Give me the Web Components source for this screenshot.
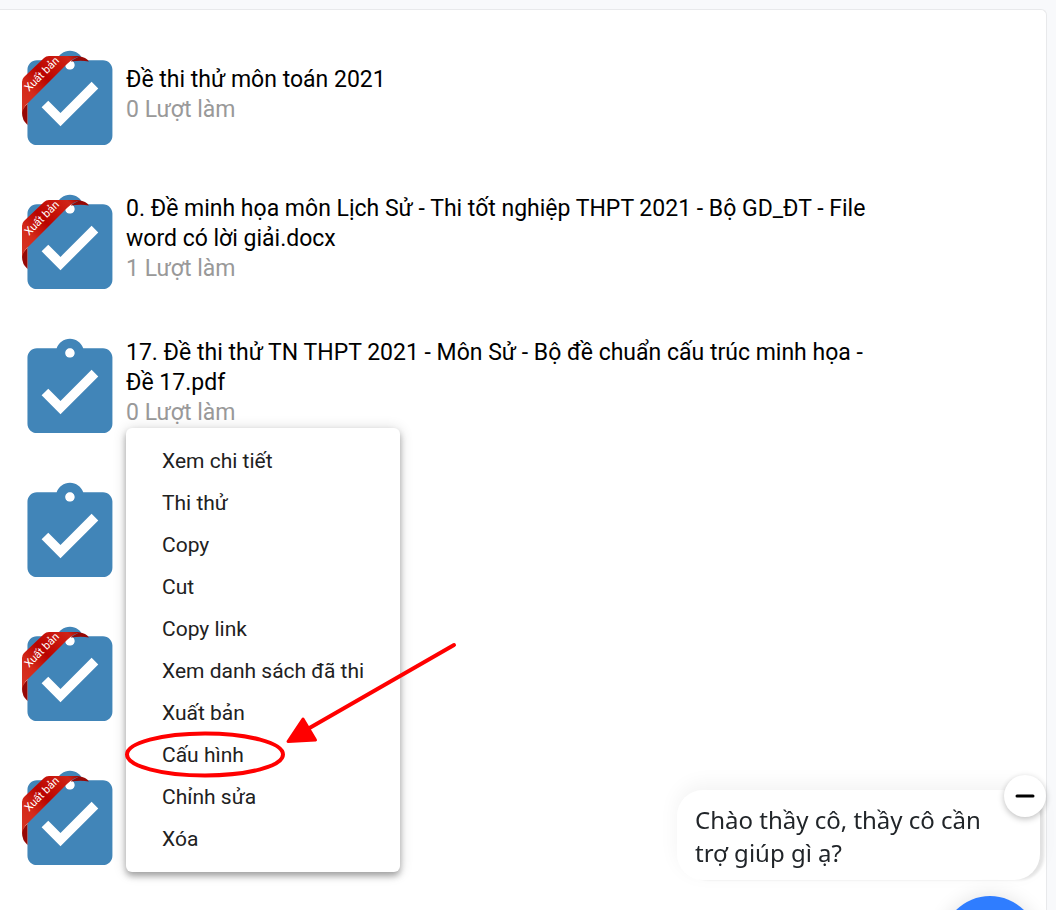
<!DOCTYPE html>
<html lang="vi">
<head>
<meta charset="utf-8">
<meta name="viewport" content="width=device-width, initial-scale=1">
<title>Danh sách đề thi</title>
<style>
  html { background: #f8f9fb; }
  body { margin: 0; font-family: Roboto, "Liberation Sans", sans-serif; color: #000; }
</style>
</head>
<body>
<exam-card>
  <exam-item published><span>Đề thi thử môn toán 2021</span><span slot="count">0 Lượt làm</span></exam-item>
  <exam-item published><span>0. Đề minh họa môn Lịch Sử - Thi tốt nghiệp THPT 2021 - Bộ GD_ĐT - File word có lời giải.docx</span><span slot="count">1 Lượt làm</span></exam-item>
  <exam-item><span>17. Đề thi thử TN THPT 2021 - Môn Sử - Bộ đề chuẩn cấu trúc minh họa - Đề 17.pdf</span><span slot="count">0 Lượt làm</span>
    <context-menu slot="menu">
      <menu-entry>Xem chi tiết</menu-entry>
      <menu-entry>Thi thử</menu-entry>
      <menu-entry>Copy</menu-entry>
      <menu-entry>Cut</menu-entry>
      <menu-entry>Copy link</menu-entry>
      <menu-entry>Xem danh sách đã thi</menu-entry>
      <menu-entry>Xuất bản</menu-entry>
      <menu-entry marked>Cấu hình</menu-entry>
      <menu-entry>Chỉnh sửa</menu-entry>
      <menu-entry>Xóa</menu-entry>
    </context-menu>
  </exam-item>
  <exam-item></exam-item>
  <exam-item published></exam-item>
  <exam-item published></exam-item>
</exam-card>
<chat-widget>Chào thầy cô, thầy cô cần trợ giúp gì ạ?</chat-widget>

<script>
const define = (name, html, setup) => {
  const template = document.createElement('template');
  template.innerHTML = html;
  customElements.define(name, class extends HTMLElement {
    constructor() {
      super();
      this.attachShadow({ mode: 'open' }).append(template.content.cloneNode(true));
    }
    connectedCallback() { if (setup) setup(this); }
  });
};

define('exam-card', `
  <style>
    :host { display: block; box-sizing: border-box; margin: 9px 9px 0 0; padding: 12px 0 24px 13px;
      min-height: calc(100vh - 9px); background: #fff; border: 1px solid #e8e9eb;
      border-width: 1px 1px 0 0; border-radius: 0 6px 0 0; }
  </style>
  <slot></slot>`);

define('exam-icon', `
  <style>
    :host { display: block; width: 113px; height: 113px; }
    svg { display: block; overflow: visible; }
    .ribbon { display: none; }
    :host([published]) .ribbon { display: inline; }
    text { font: 11px Roboto, "Liberation Sans", sans-serif; fill: #fff; }
  </style>
  <svg width="113" height="113" viewBox="0 0 113 113" aria-hidden="true">
    <defs>
      <linearGradient id="band" gradientUnits="userSpaceOnUse" x1="9" y1="60" x2="64" y2="8">
        <stop offset="0" stop-color="#d63222"/><stop offset=".22" stop-color="#d42a1a"/>
        <stop offset=".48" stop-color="#b90400"/><stop offset=".72" stop-color="#c9160c"/>
        <stop offset=".88" stop-color="#cf2417"/><stop offset="1" stop-color="#a00804"/>
      </linearGradient>
    </defs>
    <path transform="translate(0.3 0) scale(4.72)" fill="#4185b8" d="M19 3h-4.18C14.4 1.84 13.3 1 12 1c-1.3 0-2.4.84-2.82 2H5c-1.1 0-2 .9-2 2v14c0 1.1.9 2 2 2h14c1.1 0 2-.9 2-2V5c0-1.1-.9-2-2-2zm-7 0c.55 0 1 .45 1 1s-.45 1-1 1-1-.45-1-1 .45-1 1-1zm-2 14l-4-4 1.41-1.41L10 14.17l6.59-6.59L18 9l-8 8z"/>
    <g class="ribbon">
      <path fill="#960805" d="M9 64L14.500 57.500V79Q9 74 9 67Z"/>
      <path fill="#960805" d="M58 15L66 10.500Q73 11 76 15.500Q68 14 58 15.500Z"/>
      <path fill="url(#band)" d="M9 36Q9 33 11 31L31 12Q33 10 36 10H68Q60 12 54 18L16 56Q10 61 9 68Z"/>
      <text transform="translate(16 46) rotate(-45)">Xuất bản</text>
    </g>
  </svg>`);

define('exam-item', `
  <style>
    :host { position: relative; display: grid; grid-template-columns: 113px minmax(0, 1fr);
      align-items: center; min-height: 144px; padding-right: 180px; }
    exam-icon { margin-top: 17px; }
    .text { padding-top: 2px; font-size: 23px; line-height: 30px; }
    .count { color: #999; }
  </style>
  <exam-icon></exam-icon>
  <div class="text">
    <div><slot></slot></div>
    <div class="count"><slot name="count"></slot></div>
  </div>
  <slot name="menu"></slot>`,
  el => el.shadowRoot.querySelector('exam-icon').toggleAttribute('published', el.hasAttribute('published')));

define('context-menu', `
  <style>
    :host { position: absolute; z-index: 2; top: 118px; left: 113px; box-sizing: border-box; width: 274px;
      padding: 12px 0; background: #fff; border-radius: 6px;
      box-shadow: 0 4px 6px rgba(0,0,0,.3), 0 1px 14px rgba(0,0,0,.16); }
  </style>
  <slot></slot>`, el => el.setAttribute('role', 'menu'));

define('menu-entry', `
  <style>
    :host { position: relative; display: block; }
    button { display: block; width: 100%; height: 42px; padding: 0 0 0 36px; border: 0; background: none;
      font: 21px/42px Roboto, "Liberation Sans", sans-serif; color: #212121; text-align: left; white-space: nowrap; }
    svg { display: none; position: absolute; left: -2px; top: -92px; pointer-events: none; }
    :host([marked]) svg { display: block; }
  </style>
  <button type="button" role="menuitem"><slot></slot></button>
  <svg width="340" height="140" viewBox="0 0 340 140" fill="none" stroke="#f00" stroke-width="4" stroke-linecap="round" aria-hidden="true">
    <ellipse cx="81" cy="112.500" rx="78" ry="21"/>
    <path d="M330 3L182 88"/>
    <path fill="#f00" stroke-linejoin="round" stroke-width="3" d="M164 99.500L179 77L191.500 98Z"/>
  </svg>`);

define('chat-widget', `
  <style>
    :host { position: fixed; z-index: 3; right: 16px; bottom: 30px; display: block; width: 363px; }
    p { margin: 0; box-sizing: border-box; min-height: 90px; padding: 13px 50px 10px 18px; border-radius: 26px;
      background: #fff; color: #212529; font: 24px/33px "Noto Sans", "Open Sans", sans-serif;
      box-shadow: 0 -6px 20px rgba(0,0,0,.05), 6px 2px 3px -2px rgba(0,0,0,.1); }
    button { position: absolute; padding: 0; border: 0; border-radius: 50%; }
    .close { right: -6px; top: -15px; display: grid; place-items: center; width: 42px; height: 42px;
      background: #fff; box-shadow: 0 2px 6px rgba(0,0,0,.25); }
    .open { right: 2px; top: 106px; width: 96px; height: 96px; background: #2f7dff; box-shadow: 0 0 20px rgba(0,0,0,.12); }
  </style>
  <p><slot></slot></p>
  <button class="close" type="button" aria-label="Thu nhỏ">
    <svg width="20" height="4" viewBox="0 0 20 4"><path d="M2 2H18" stroke="#000" stroke-width="3" stroke-linecap="round"/></svg>
  </button>
  <button class="open" type="button" aria-label="Mở chat"></button>`);
</script>
</body>
</html>
